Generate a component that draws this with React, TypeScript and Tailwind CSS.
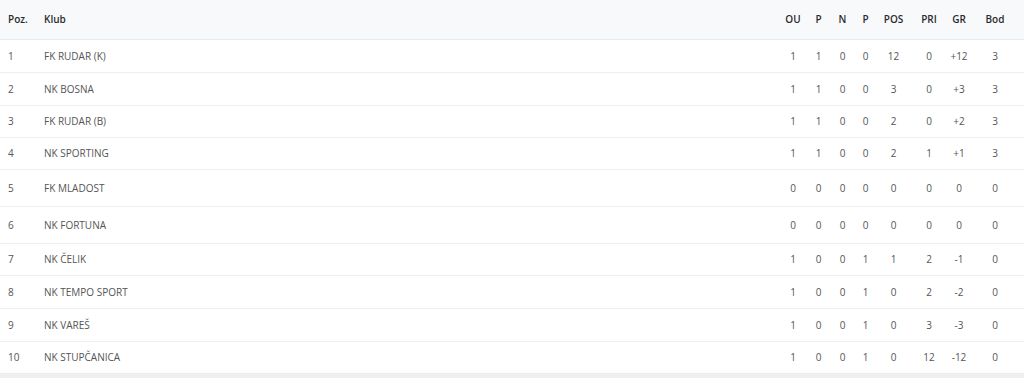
import React from "react";

const rows: [number, string, number[], string][] = [
  [1, "FK RUDAR (K)", [1, 1, 0, 0, 12, 0], "+12"],
  [2, "NK BOSNA", [1, 1, 0, 0, 3, 0], "+3"],
  [3, "FK RUDAR (B)", [1, 1, 0, 0, 2, 0], "+2"],
  [4, "NK SPORTING", [1, 1, 0, 0, 2, 1], "+1"],
  [5, "FK MLADOST", [0, 0, 0, 0, 0, 0], "0"],
  [6, "NK FORTUNA", [0, 0, 0, 0, 0, 0], "0"],
  [7, "NK ČELIK", [1, 0, 0, 1, 1, 2], "-1"],
  [8, "NK TEMPO SPORT", [1, 0, 0, 1, 0, 2], "-2"],
  [9, "NK VAREŠ", [1, 0, 0, 1, 0, 3], "-3"],
  [10, "NK STUPČANICA", [1, 0, 0, 1, 0, 12], "-12"],
];
const points = [3, 3, 3, 3, 0, 0, 0, 0, 0, 0];
const heights = ["h-[33px]", "h-[33px]", "h-[32px]", "h-[32px]", "h-[37px]", "h-[37px]", "h-[32px]", "h-[33px]", "h-[33px]", "h-[32px]"];

const widths = ["w-[26px]", "w-[25px]", "w-[23px]", "w-[23px]", "w-[33px]", "w-[38px]", "w-[22px]", "w-[50px]"];

function Cells({ vals }: { vals: (string | number)[] }) {
  return (
    <>
      {vals.map((v, i) => (
        <div key={i} className={`${widths[i]} shrink-0 text-center`}>
          {v}
        </div>
      ))}
    </>
  );
}

export default function App() {
  return (
    <div
      className="w-[1024px] h-[378px] bg-white text-[10px]"
      style={{ fontFamily: '"Open Sans", "Noto Sans", sans-serif' }}
    >
      <div className="flex items-center h-[40px] bg-[#f8f9fb] border-b border-[#e9ecef] font-semibold text-[#2b2b2b]">
        <div className="w-[44px] pl-[8px] shrink-0">Poz.</div>
        <div className="flex-1">Klub</div>
        <Cells vals={["OU", "P", "N", "P", "POS", "PRI", "GR", "Bod"]} />
        <div className="w-[4px] shrink-0" />
      </div>
      {rows.map(([pos, name, vals, gr], idx) => (
        <div
          key={pos}
          className={`flex items-center border-b border-[#eceef0] text-[#555] ${heights[idx]}`}
        >
          <div className="w-[44px] pl-[8px] shrink-0">{pos}</div>
          <div className="flex-1">{name}</div>
          <Cells vals={[...vals, gr, points[idx]]} />
          <div className="w-[4px] shrink-0" />
        </div>
      ))}
      <div className="h-[4px] bg-[#efefef]" />
    </div>
  );
}
